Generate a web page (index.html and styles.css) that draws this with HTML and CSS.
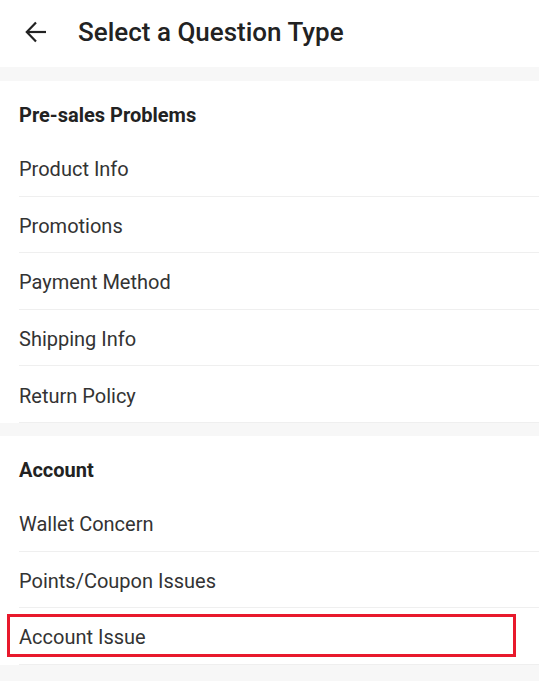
FILE: index.html
```html
<!DOCTYPE html>
<html lang="en">
<head>
<meta charset="utf-8">
<title>Select a Question Type</title>
<link rel="stylesheet" href="styles.css">
</head>
<body>
<header class="topbar">
  <span class="back" aria-label="Back">
    <svg width="22" height="22" viewBox="0 0 22 22" fill="none" stroke="#222" stroke-width="2.2" stroke-linecap="butt" stroke-linejoin="miter">
      <path d="M21 11H2.5"/>
      <path d="M11 1.5L1.8 11L11 20.5"/>
    </svg>
  </span>
  <h1 class="title">Select a Question Type</h1>
</header>
<main class="content">
  <section class="group">
    <h2 class="group-title">Pre-sales Problems</h2>
    <ul class="list">
      <li class="item">Product Info</li>
      <li class="item">Promotions</li>
      <li class="item">Payment Method</li>
      <li class="item">Shipping Info</li>
      <li class="item">Return Policy</li>
    </ul>
  </section>
  <section class="group">
    <h2 class="group-title">Account</h2>
    <ul class="list">
      <li class="item">Wallet Concern</li>
      <li class="item">Points/Coupon Issues</li>
      <li class="item item-highlight"><span class="highlight-box"></span>Account Issue</li>
    </ul>
  </section>
</main>
</body>
</html>
```
FILE: styles.css
```css
* { box-sizing: border-box; }
html, body { margin: 0; padding: 0; }
body {
  background: #f7f7f7;
  font-family: Roboto, "Noto Sans", "Liberation Sans", sans-serif;
  color: #333;
  width: 539px;
  height: 681px;
  overflow: hidden;
}
.topbar {
  height: 67px;
  background: #fff;
  display: flex;
  align-items: center;
  padding-left: 25px;
  padding-bottom: 3px;
}
.back {
  display: flex;
  width: 22px;
  height: 22px;
}
.title {
  margin: 0 0 0 31px;
  font-size: 26px;
  font-weight: 500;
  color: #222;
  letter-spacing: 0;
}
.content {
  padding-top: 14px;
  display: flex;
  flex-direction: column;
  gap: 13px;
}
.group {
  background: #fff;
}
.group-title {
  margin: 0;
  height: 59px;
  padding: 22px 0 0 19px;
  font-size: 20px;
  line-height: 24px;
  font-weight: 700;
  color: #222;
}
.list {
  list-style: none;
  margin: 0;
  padding: 0 0 0 19px;
}
.item {
  position: relative;
  height: 56.6px;
  display: flex;
  align-items: center;
  padding-top: 3px;
  font-size: 20px;
  color: #333;
  border-bottom: 1px solid #efefef;
}
.highlight-box {
  position: absolute;
  left: -12px;
  top: 6px;
  width: 509px;
  height: 43px;
  border: 3px solid #e8192c;
  pointer-events: none;
}
```
